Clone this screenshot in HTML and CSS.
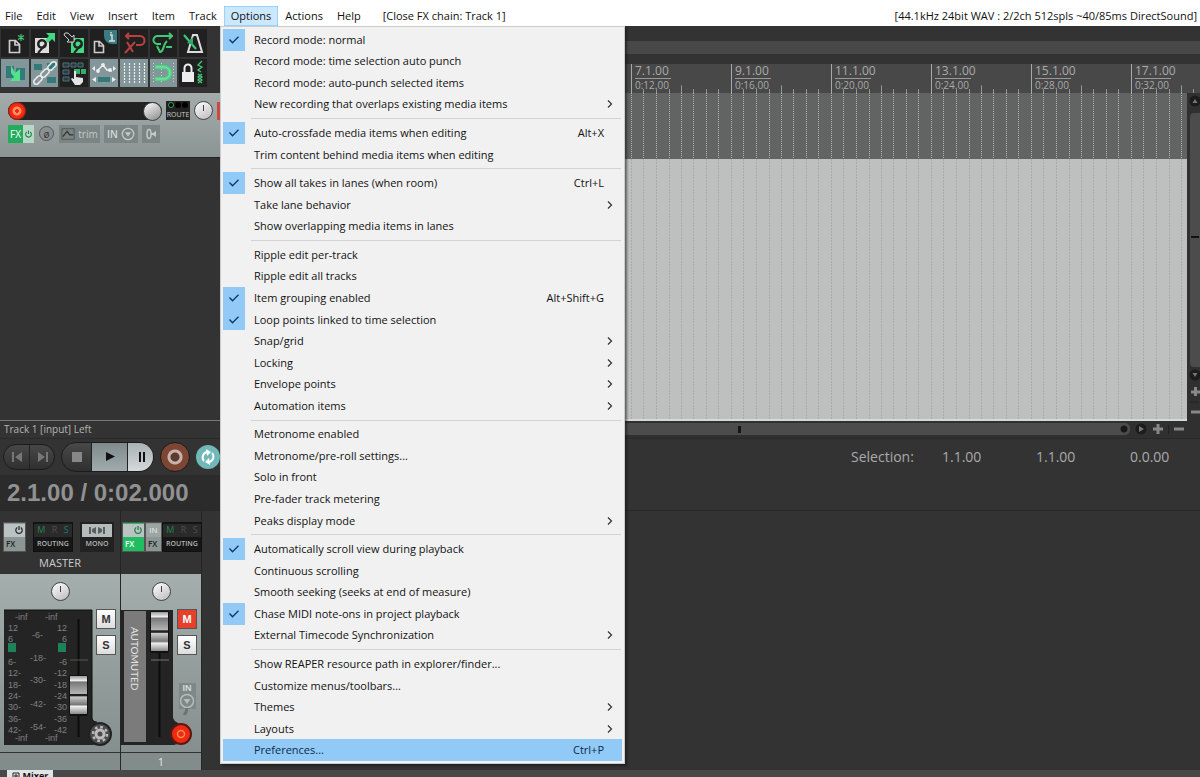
FILE: index.html
```html
<!DOCTYPE html>
<html lang="en">
<head>
<meta charset="utf-8">
<title>REAPER</title>
<link rel="stylesheet" href="styles.css">
</head>
<body>
<svg class="defs" aria-hidden="true">
  <defs>
    <linearGradient id="cap" x1="0" y1="0" x2="0" y2="1"><stop offset="0" stop-color="#999"/><stop offset=".12" stop-color="#eee"/><stop offset=".16" stop-color="#777"/><stop offset=".46" stop-color="#b5b5b5"/><stop offset=".48" stop-color="#222"/><stop offset=".52" stop-color="#222"/><stop offset=".55" stop-color="#ccc"/><stop offset=".75" stop-color="#777"/><stop offset=".8" stop-color="#eee"/><stop offset="1" stop-color="#888"/></linearGradient>
    <symbol id="check" viewBox="0 0 22 21"><path d="M6.500 10.500l3 3.200 6-6" fill="none" stroke="#10375c" stroke-width="1.300"/></symbol>
    <symbol id="chev" viewBox="0 0 8 10"><path d="M2 1.500l3.500 3.500L2 8.500" fill="none" stroke="#333" stroke-width="1.200"/></symbol>
    <symbol id="ticks" viewBox="0 0 100 30" preserveAspectRatio="none"><path d="M.5 0v30" stroke="#aaa"/><path d="M12.500 26v4M25.500 26v4M38.500 26v4M62.500 26v4M75.500 26v4M87.500 26v4M50.500 22v8" stroke="#999"/></symbol>
    <symbol id="power" viewBox="0 0 10 10"><path d="M3.200 2.600a3.200 3.200 0 1 0 3.600 0M5 1v4" fill="none" stroke="currentColor" stroke-width="1.200"/></symbol>
  </defs>
</svg>

<nav class="menubar">
  <button>File</button><button>Edit</button><button>View</button><button>Insert</button><button>Item</button><button>Track</button><button class="open">Options</button><button>Actions</button><button>Help</button>
  <button class="closefx">[Close FX chain: Track 1]</button>
  <span class="audio">[44.1kHz 24bit WAV : 2/2ch 512spls ~40/85ms DirectSound]</span>
</nav>

<main class="workspace">
  <section class="side">
    <div class="toolbar">
      <button aria-label="New project"><svg viewBox="0 0 28 28"><path d="M8.500 11.500h6l4 4v8h-10zM14 12v4h4" fill="none" stroke="#ccc" stroke-width="1.700"/><path d="M20 5v7M17 6.500l6 4M23 6.500l-6 4" stroke="#43c876" stroke-width="1.200"/></svg></button>
      <button aria-label="Open project"><svg viewBox="0 0 28 28"><path d="M4 9h14v15H4z" fill="#ddd"/><circle cx="11" cy="15" r="5" fill="#222"/><circle cx="11" cy="15" r="2.500" fill="#ddd"/><path d="M7 24l7-8" stroke="#222" stroke-width="2"/><path d="M15 4h9v9l-3-3-4 4-3-3 4-4z" fill="#43d982"/></svg></button>
      <button aria-label="Save project"><svg viewBox="0 0 28 28"><path d="M11 9h13v15H11z" fill="#43d982"/><circle cx="18" cy="15" r="5" fill="#222"/><circle cx="18" cy="15" r="2.500" fill="#43d982"/><path d="M14 24l7-8" stroke="#222" stroke-width="2"/><path d="M5 4h3l4 4 2-2v7H7l2-2-5-5z" fill="#222" stroke="#ccc"/></svg></button>
      <button aria-label="Project settings"><svg viewBox="0 0 28 28"><path d="M4.500 12.500h5l4 4v7h-9zM9 13v4h4" fill="none" stroke="#ccc" stroke-width="1.600"/><path d="M14 1h13v14h-5a8 8 0 0 1-8-8z" fill="#397c83"/><path d="M20 6h2v6M19 12h6M21 3v1.500" stroke="#ddd" stroke-width="1.500" fill="none"/></svg></button>
      <button aria-label="Undo"><svg viewBox="0 0 28 28" fill="none" stroke="#b94141" stroke-width="2"><path d="M6 7h14a4 4 0 0 1 0 9h-4M9 4L6 7l3 3M7 13l6 10M15 13L5 24"/></svg></button>
      <button aria-label="Redo"><svg viewBox="0 0 28 28" fill="none" stroke="#43c876" stroke-width="2"><path d="M23 7H9a4 4 0 0 0-1 8h4M20 4l3 3-3 3M18 12c-4 3-3 11-7 11l-3-6M17 18h6"/></svg></button>
      <button aria-label="Metronome"><svg viewBox="0 0 28 28" fill="none"><path d="M14 6h4l5 17H9z" stroke="#ddd" stroke-width="2"/><path d="M5 6l12 14" stroke="#36d279" stroke-width="2"/><path d="M8 14l6-6v8z" fill="#36a565"/></svg></button>
      <button class="on" aria-label="Auto-crossfade"><svg viewBox="0 0 28 28"><path d="M5 7h8v12H5zM15 9h9v12h-9z" fill="#347a7b"/><path d="M10 6l4 8 5-4v12H9l4-4-3-4z" fill="#50e48b"/></svg></button>
      <button class="on" aria-label="Item grouping"><svg viewBox="0 0 28 28"><path d="M3 5h8v6H3zM16 18h9v6h-9zM16 4h8v6h-8z" fill="#347a7b"/><g fill="none" stroke="#e8e8e8" stroke-width="1.700"><rect x="-5" y="-2.500" width="10" height="5" rx="2.500" transform="translate(7 21) rotate(-45)"/><rect x="-5" y="-2.500" width="10" height="5" rx="2.500" transform="translate(14 14) rotate(-45)"/><rect x="-5" y="-2.500" width="10" height="5" rx="2.500" transform="translate(21 7) rotate(-45)"/></g></svg></button>
      <button aria-label="Ripple editing"><svg viewBox="0 0 28 28"><path d="M3 4h6v4H3zM11 4h5v4h-5zM18 4h5v4h-5zM3 11h6v4H3zM3 18h6v4H3z" fill="#273b42" stroke="#527078"/><path d="M14 10h6v5h-6zM21 10h5v5h-5z" fill="#36ae6b"/><path d="M14 12h2v6l7 1v4l-3 3h-5l-4-6 1-1 2 1z" fill="#e4e4e4"/></svg></button>
      <button class="on" aria-label="Envelope move"><svg viewBox="0 0 28 28"><path d="M7 12l6-6 4 5 5 1" fill="none" stroke="#eee" stroke-width="1.500"/><circle cx="8" cy="12" r="1.900" fill="#eee"/><circle cx="13" cy="6" r="1.900" fill="#eee"/><circle cx="20" cy="11" r="1.900" fill="#eee"/><path d="M8 18h12v5H8z" fill="#347a7b"/><path d="M6 18v5l-4-2.500zM22 18v5l4-2.500zM5 7v5L2 9.500zM23 7v5l3-2.500z" fill="#eee"/></svg></button>
      <button class="on" aria-label="Grid"><svg viewBox="0 0 28 28"><path d="M4.500 4v21M9.500 4v21M14.500 4v21M19.500 4v21M24.500 4v21" stroke="#eee" stroke-width="1.200" stroke-dasharray="2 1"/></svg></button>
      <button class="on" aria-label="Snap"><svg viewBox="0 0 28 28"><path d="M4.500 4v21M12.500 4v21M24.500 4v21" stroke="#c8d2d2" stroke-dasharray="1 2"/><path d="M6 8h9a6 6 0 0 1 0 12H6" fill="none" stroke="#3ddd80" stroke-width="4"/><path d="M7 8h8a6 6 0 0 1 0 12H7" fill="none" stroke="#a2d6b8"/></svg></button>
      <button aria-label="Lock"><svg viewBox="0 0 28 28"><path d="M3 13h12v10H3z" fill="#eee"/><path d="M5.500 13V9a3.500 3.500 0 0 1 7 0v4" fill="none" stroke="#eee" stroke-width="2"/><path d="M23 2l-4 4 4 2-4 3 3 2M19 15l4 3-4 3 4 3M23 15l-4 3 4 3-4 3" fill="none" stroke="#43c876" stroke-width="1.300"/></svg></button>
    </div>
    <div class="tcp">
      <div class="tcprow">
        <div class="namebar"><button class="rec" aria-label="Record arm"></button><button class="knob" aria-label="Volume"></button></div>
        <button class="route"><i></i><i></i><i></i><span>ROUTE</span></button>
        <button class="knob up" aria-label="Pan"></button>
        <span class="meterclip"></span>
      </div>
      <div class="tcprow">
        <button class="fx">FX<span><svg><use href="#power"/></svg></span></button>
        <button class="phase" aria-label="Phase">ø</button>
        <button class="chip trim"><svg viewBox="0 0 16 14"><path d="M1 1h14v12H1z" fill="none" stroke="#4b5353"/><path d="M2 10l5-6 3 4h4" fill="none" stroke="#333" stroke-width="1.500"/></svg>trim</button>
        <button class="chip in"><b>IN</b><svg viewBox="0 0 16 16"><circle cx="8" cy="8" r="6.500" fill="none" stroke="#c3c9c9" stroke-width="1.500"/><path d="M4.500 6h7L8 11z" fill="#c3c9c9"/></svg></button>
        <button class="chip" aria-label="Monitor"><svg viewBox="0 0 14 14"><ellipse cx="5" cy="7" rx="2" ry="4.500" fill="none" stroke="#c3c9c9" stroke-width="1.500"/><path d="M7 6h2l3-2v6L9 8H7z" fill="#c3c9c9"/></svg></button>
      </div>
    </div>
  </section>
  <section class="arrange">
    <div class="navbar"></div>
    <div class="ruler" id="ruler"></div>
    <div class="lane" id="lane"></div>
    <div class="empty" id="empty"></div>
  </section>
  <aside class="vscroll"><svg viewBox="0 0 13 328"><rect x="3" y="20" width="14" height="254" rx="4" fill="#4c4c4c"/><circle cx="8" cy="8" r="5.500" fill="#1c1c1c"/><path d="M5.500 10h5L8 6z" fill="#777"/><path d="M4 144h8" stroke="#111" stroke-width="2"/><circle cx="8" cy="282" r="5.500" fill="#1c1c1c"/><path d="M5.500 280h5L8 284z" fill="#777"/><path d="M4 299h9M8.500 294v9M4 319h9" stroke="#888" stroke-width="3"/><path d="M3 309h9" stroke="#222"/></svg></aside>
</main>

<section class="transport">
  <div class="status">Track 1 [input] Left</div>
  <div class="hscroll"><div class="thumb"><i></i></div><svg viewBox="0 0 70 16"><circle cx="11" cy="8" r="5.500" fill="#1c1c1c"/><path d="M9 5v6l5-3z" fill="#777"/><path d="M23 8h10M28 3v10M44 8h10" stroke="#888" stroke-width="3"/><path d="M38.500 4v9" stroke="#222"/></svg></div>
  <div class="buttons">
    <div class="pill nav"><button aria-label="Start"><svg viewBox="0 0 12 10"><path d="M1 0h2v10H1zM11 0v10L4 5z" fill="#777"/></svg></button><button aria-label="End"><svg viewBox="0 0 12 10"><path d="M9 0h2v10H9zM1 0v10l7-5z" fill="#777"/></svg></button></div>
    <div class="pill play"><button aria-label="Stop"><svg viewBox="0 0 12 10"><path d="M1 0h10v10H1z" fill="#888"/></svg></button><button aria-label="Play"><svg viewBox="0 0 12 10"><path d="M2 0v9l9-4.500z" fill="#111"/></svg></button><button aria-label="Pause"><svg viewBox="0 0 12 10"><path d="M3 0h2v10H3zM7 0h2v10H7z" fill="#111"/></svg></button></div>
    <button class="bigrec" aria-label="Record"></button>
    <button class="loop" aria-label="Repeat"><svg viewBox="0 0 16 16"><path d="M4 12a5.500 5.500 0 0 1 3-9M12 4a5.500 5.500 0 0 1-3 9" fill="none" stroke="#fff" stroke-width="2"/><path d="M6 0l5 3-4 4zM10 16l-5-3 4-4z" fill="#fff"/></svg></button>
  </div>
  <div class="selection"><span>Selection:</span><span>1.1.00</span><span>1.1.00</span><span>0.0.00</span></div>
  <div class="time">2.1.00 / 0:02.000</div>
</section>

<section class="mixer">
  <article class="strip master">
    <header>
      <div class="heads">
        <button class="fxbox"><span><svg><use href="#power"/></svg></span><b>FX</b></button>
        <button class="routing"><span><i class="g">M</i><i>R</i><i class="b">S</i></span><b>ROUTING</b></button>
        <button class="mono"><svg viewBox="0 0 30 13"><path d="M0 0h30v13H0z" fill="#b4bdbc"/><path d="M7 3h2v7H7zM10 5l4-2v7l-4-2zM23 3h-2v7h2zM20 5l-4-2v7l4-2z" fill="#596160"/></svg><b>MONO</b></button>
      </div>
      <h2>MASTER</h2>
    </header>
    <div class="body">
      <button class="knob up" aria-label="Pan"></button>
      <div class="panel">
        <svg class="meter" viewBox="0 0 112 138" role="img" aria-label="Master meter">
          <path d="M0 1h88v108a8 8 0 0 0 5 5a12 12 0 0 1-4 22H0z" fill="#242424"/>
          <path d="M0 1h88v108q0 4 5 4" fill="none" stroke="#111"/>
          <g fill="#808080" font-size="9">
            <text x="11" y="11">-inf</text><text x="41" y="11">-inf</text>
            <text x="4" y="22">12</text><text x="4" y="33">6</text><text x="4" y="56">6-</text><text x="4" y="67">12-</text><text x="4" y="79">18-</text><text x="4" y="90">24-</text><text x="4" y="101">30-</text><text x="4" y="113">36-</text><text x="4" y="124">42-</text>
            <text x="28" y="29">-6-</text><text x="26" y="52">-18-</text><text x="26" y="74">-30-</text><text x="26" y="98">-42-</text><text x="26" y="121">-54-</text>
            <g text-anchor="end"><text x="63" y="22">12</text><text x="63" y="33">6</text><text x="63" y="56">-6</text><text x="63" y="67">-12</text><text x="63" y="79">-18</text><text x="63" y="90">-24</text><text x="63" y="101">-30</text><text x="63" y="113">-36</text><text x="63" y="124">-42</text></g>
            <text x="11" y="132">-inf</text><text x="41" y="132">-inf</text>
          </g>
          <path d="M4 34h8v9H4zM54 34h8v9h-8z" fill="#1d8257"/>
          <path d="M74.500 10v118" stroke="#0c0c0c" stroke-width="2"/><path d="M66 51h18" stroke="#555"/>
          <rect x="65" y="66" width="19" height="41" rx="2" fill="#111"/><rect x="66" y="67" width="17" height="38" fill="url(#cap)"/>
          <circle cx="96" cy="125" r="11" fill="#4c4c4c" stroke="#222" stroke-width="2"/><circle cx="96" cy="125" r="4" fill="none" stroke="#bbb" stroke-width="3"/><circle cx="96" cy="125" r="7" fill="none" stroke="#bbb" stroke-width="2.500" stroke-dasharray="2.700 2.800"/>
        </svg>
        <div class="ms"><button>M</button><button>S</button></div>
      </div>
    </div>
    <footer></footer>
  </article>
  <article class="strip track">
    <header>
      <div class="heads">
        <button class="fxbox lit"><span><svg><use href="#power"/></svg></span><b>FX</b></button>
        <button class="fxbox input"><span>IN</span><b>FX</b></button>
        <button class="routing"><span><i class="g">M</i><i>R</i><i>S</i></span><b>ROUTING</b></button>
      </div>
    </header>
    <div class="body">
      <button class="knob up" aria-label="Pan"></button>
      <div class="panel">
        <svg class="meter" viewBox="0 0 76 138" role="img" aria-label="Track fader">
          <path d="M0 1h52v108a8 8 0 0 0 5 5a12 12 0 0 1-4 22H0z" fill="#242424"/>
          <path d="M3 2h22v131H3z" fill="#7b7b7b"/>
          <text class="automuted" transform="translate(10 18) rotate(90)" fill="#e5e5e5" font-size="10">AUTOMUTED</text>
          <path d="M38.500 10v118" stroke="#0c0c0c" stroke-width="2"/><path d="M30 51h18" stroke="#777"/>
          <rect x="29" y="2" width="19" height="42" rx="2" fill="#111"/><rect x="30" y="3" width="17" height="39" fill="url(#cap)"/>
          <circle cx="60" cy="125" r="10" fill="#ed2b14" stroke="#5e1710" stroke-width="2"/><circle cx="60" cy="125" r="3.500" fill="none" stroke="#ff8a4a" stroke-width="1.500"/>
        </svg>
        <div class="ms"><button class="muted">M</button><button>S</button>
          <button class="inbtn">IN<svg viewBox="0 0 16 22"><circle cx="8" cy="8" r="6.500" fill="none" stroke="#b5bcbc" stroke-width="1.500"/><path d="M4.500 6h7L8 11z" fill="#b5bcbc"/><path d="M8 15q0 4-3 7" stroke="#6c7473" stroke-width="3" fill="none"/></svg></button>
        </div>
      </div>
    </div>
    <footer>1</footer>
  </article>
</section>
<footer class="docker"><button><svg viewBox="0 0 8 8"><path d="M1 1h6v6H1zM3 3h2v2H3z" fill="none" stroke="#222"/></svg>Mixer</button></footer>

<div class="menu" id="menu" role="menu"></div>
<script src="app.js"></script>
</body>
</html>
```
FILE: styles.css
```css
* { box-sizing: border-box; }
body { margin: 0; height: 100vh; overflow: hidden; display: flex; flex-direction: column; background: #333; color: #111; font-family: "Open Sans", "Noto Sans", sans-serif; font-size: 11px; line-height: 16px; }
button { margin: 0; padding: 0; border: 0; background: none; color: inherit; font: inherit; display: flex; align-items: center; justify-content: center; flex: none; }
svg { display: block; }
.defs { position: absolute; width: 0; height: 0; }

.menubar { display: flex; align-items: flex-end; height: 26px; background: #fff; padding-right: 3px; flex: none; white-space: nowrap; }
.menubar button { height: 20px; padding: 0 7px; }
.menubar button:first-child { padding-left: 5px; }
.menubar .open { background: #cce8ff; border: 1px solid #99d1ff; padding: 0 6px; }
.menubar .closefx { padding-left: 15px; }
.audio { margin-left: auto; line-height: 20px; }

.workspace { display: flex; flex: none; height: 395px; }
.side { width: 220px; flex: none; background: #333; border-bottom: 1px solid #777; }
.toolbar { display: grid; grid-template-columns: repeat(7, minmax(0, 1fr)); gap: 2px; width: 207px; padding: 3px 0 6px 1px; }
.toolbar button { height: 28px; background: #202020; }
.toolbar button.on { background: #83969a; }
.toolbar svg { width: 28px; height: 28px; flex: none; }
.tcp { background: linear-gradient(#a3acab, #8b9594); height: 65px; padding: 8px 0 0 8px; display: flex; flex-direction: column; gap: 4px; border-bottom: 1px solid #222; }
.tcprow { display: flex; align-items: center; gap: 4px; height: 19px; }
.namebar { width: 155px; height: 18px; border-radius: 9px; background: #222; display: flex; justify-content: space-between; }
.rec { width: 18px; height: 18px; border-radius: 50%; background: radial-gradient(circle, #f22a14 0 2px, #ff9060 2px 4px, #f22a14 5px 7px, #8b1b10 9px); }
.knob { width: 19px; height: 19px; border-radius: 50%; border: 1px solid #444; background: linear-gradient(150deg, #fff, #888); }
.knob.up { background: linear-gradient(#444, #444) 50% 3px / 1px 6px no-repeat, linear-gradient(150deg, #fff, #bbb); }
.route { width: 24px; height: 19px; background: #222; color: #ccc; font-size: 7px; line-height: 8px; flex-wrap: wrap; gap: 1px; }
.route i { width: 6px; height: 6px; border-radius: 50%; background: #000; }
.route i:first-child { border: 1px solid #2ba55c; }
.meterclip { width: 3px; height: 18px; margin-left: auto; background: #cb4a42; }
.fx { width: 26px; height: 18px; background: #23ac5e; color: #fff; font-size: 10px; justify-content: flex-end; gap: 2px; }
.fx span { background: #b8d8c6; color: #1f7f48; padding: 4px 1px; }
.fx svg { width: 9px; height: 10px; }
.phase { width: 15px; height: 15px; border: 1px solid #555; border-radius: 50%; background: #8a9291; color: #333; font-size: 10px; line-height: 10px; margin: 0 1px; }
.chip { height: 18px; padding: 0 2px; gap: 3px; background: #7b8584; color: #c3c9c9; font-size: 10px; }
.chip svg { width: 14px; height: 14px; }
.chip b { color: #d5dada; font-weight: 600; }
.trim { width: 41px; }
.in { width: 34px; }

.arrange { flex: 1; min-width: 0; }
.navbar { height: 38px; background: linear-gradient(#333 15px, #484848 15px 28px, #333 28px); margin-right: -13px; }
.ruler, .lane, .empty { display: flex; padding-left: 411px; }
.lane, .empty { overflow: hidden; }
.ruler { height: 29px; background: #484848; margin-right: -13px; }
.lane { height: 66px; background: #616463; }
.empty { height: 262px; background: #bdc0bf; border-bottom: 2px solid #d5dad9; }
.bar { width: 100px; flex: none; position: relative; }
.ruler .bar { padding-left: 4px; color: #aaa; font-size: 12px; line-height: 14px; }
.ruler .bar small { display: block; width: 36px; border-top: 1px solid #999; font-size: 10px; line-height: 12px; }
.ruler .bar svg { position: absolute; inset: 0; width: 100px; height: 29px; }
.bar > .grid { width: 100px; height: 262px; }
.vscroll { width: 13px; margin-top: 67px; flex: none; background: #303030; }
.vscroll svg { width: 13px; height: 328px; }

.transport { display: grid; grid-template-columns: 220px 1fr; grid-template-rows: 18px 36px 35px; flex: none; border-bottom: 1px solid #292929; }
.status { padding-left: 4px; color: #b5b5b5; font-size: 10px; line-height: 17px; border-bottom: 1px solid #292929; }
.hscroll { display: flex; background: #303030; border-bottom: 1px solid #292929; }
.thumb { flex: 1; height: 12px; margin-top: 2px; border-radius: 0 5px 5px 0; background: radial-gradient(circle at calc(100% - 6px) 50%, #181818 3px, transparent 4px), #4c4c4c; }
.thumb i { display: block; width: 3px; height: 7px; margin: 3px 0 0 518px; background: #151515; }
.hscroll svg { width: 70px; height: 16px; }
.buttons { display: flex; align-items: center; gap: 6px; padding-left: 3px; overflow: hidden; }
.pill { display: flex; border-radius: 15px; overflow: hidden; border: 1px solid #1c1c1c; background: linear-gradient(#484848, #303030); }
.pill button { width: 30px; height: 28px; border-right: 1px solid #222; }
.pill.nav button { width: 26px; height: 24px; }
.pill button:last-child { border-right: 0; }
.pill svg { width: 12px; height: 10px; }
.play button:nth-child(2) { width: 36px; background: linear-gradient(#7f8a8c, #a1abad); }
.play button:nth-child(3) { width: 28px; background: linear-gradient(#a9b1b2, #d5dadb); }
.bigrec { width: 30px; height: 30px; border-radius: 50%; border: 1px solid #1c1c1c; background: radial-gradient(circle, #5b3a30 0 4px, #c9b2aa 5px 7px, #7d4634 8px 14px); }
.loop { width: 24px; height: 24px; border-radius: 50%; background: #71b8b9; }
.loop svg { width: 16px; height: 16px; }
.selection { display: flex; gap: 30px; padding-left: 631px; align-items: center; color: #aaa; font-size: 14px; }
.selection span { flex: none; width: 64px; }
.selection span:first-child { width: 61px; }
.time { grid-column: 1; background: #2b2b2b; color: #919191; font: bold 24px/35px "Liberation Sans", Arial, sans-serif; padding-left: 7px; }

.mixer { display: flex; flex: 1; min-height: 0; }
.strip { display: flex; flex-direction: column; border-right: 1px solid #262626; }
.master { width: 121px; }
.track { width: 81px; }
.strip header { height: 63px; padding-top: 11px; flex: none; }
.heads { display: flex; gap: 7px; padding-left: 3px; }
.track .heads { gap: 0; padding-left: 1px; }
.heads b { font-weight: 600; font-size: 7px; line-height: 14px; }
.heads .fxbox b { font-size: 8px; }
.fxbox { width: 23px; height: 30px; flex-direction: column; background: #8b9695; border: 1px solid #555; align-items: stretch; color: #222; }
.fxbox span { background: #bac3c1; height: 13px; display: flex; justify-content: flex-end; align-items: center; padding-right: 1px; }
.fxbox svg { width: 10px; height: 10px; }
.fxbox b { text-align: left; padding-left: 2px; }
.lit { background: #20bd63; color: #fff; }
.lit svg { color: #1d7e46; }
.input { width: 17px; font-size: 8px; }
.input span { color: #eee; background: #9ba5a4; justify-content: center; padding: 0; }
.routing { width: 40px; height: 30px; flex-direction: column; background: #161616; color: #b5b5b5; border: 1px solid #111; align-items: stretch; }
.routing span { display: flex; justify-content: space-around; background: #2a2a2a; height: 13px; font-size: 9px; line-height: 12px; color: #4d4d4d; }
.routing i { font-style: normal; }
.routing .g { color: #26844c; }
.routing .b { color: #27757c; }
.mono { width: 34px; height: 30px; flex-direction: column; background: #222; color: #b5b5b5; }
.mono svg { width: 30px; height: 13px; }
.strip h2 { margin: 3px 0 0; text-align: center; font-weight: 400; font-size: 11px; line-height: 16px; color: #ccc; }
.body { flex: 1; background: linear-gradient(#a3aead, #848f8e); padding-top: 8px; display: flex; flex-direction: column; align-items: center; }
.panel { display: flex; width: 100%; margin-top: 8px; }
.master .panel { padding-left: 4px; }
.meter { width: 112px; height: 138px; flex: none; font-family: "Liberation Sans", Arial, sans-serif; }
.automuted { font-family: Lato, sans-serif; }
.track .meter { width: 76px; }
.ms { display: flex; flex-direction: column; gap: 6px; margin-left: -20px; }
.ms button { width: 20px; height: 20px; background: linear-gradient(#fff, #ddd); border: 1px solid #555; font: bold 11px/16px "Liberation Sans", Arial, sans-serif; color: #333; }
.ms .muted { background: #e4402c; color: #fff; }
.ms .inbtn { background: #7d8887; border: 0; width: 17px; height: 26px; margin-top: 22px; flex-direction: column; color: #d5dada; font-size: 9px; line-height: 10px; align-self: center; justify-content: flex-start; }
.inbtn svg { width: 16px; height: 22px; flex: none; }
.strip > footer { height: 18px; border-top: 1px solid #333; background: #818c8b; color: #e5e5e5; text-align: center; line-height: 17px; flex: none; }
.docker { height: 7px; background: #484848; flex: none; overflow: hidden; padding-left: 7px; }
.docker button { background: #e0e5e5; width: 46px; height: 12px; gap: 3px; font: bold 9px/12px "Open Sans", sans-serif; }
.docker svg { width: 8px; height: 8px; }

.menu { position: absolute; left: 220px; top: 26px; bottom: 13px; width: 405px; padding: 2px; background: #f1f1f1; border: 1px solid #ccc; box-shadow: 2px 2px 2px #1118; display: flex; flex-direction: column; }
.item { flex: 1 1 0; min-height: 0; padding-right: 8px; text-align: left; }
.item .mark { width: 22px; align-self: stretch; margin-right: 9px; }
.item.checked .mark { background: #91c9f7; }
.item .mark svg { width: 22px; height: 21px; }
.item .label { flex: 1; }
.item .arrow { width: 8px; height: 10px; }
.item .key { margin-right: 10px; }
.item.hot { background: #91c9f7; color: #0b2c4c; }
.menu hr { width: 370px; height: 1px; margin: 3px 1px 3px auto; border: 0; background: #d3d3d3; flex: none; }
```
FILE: app.js
```javascript
const groups = [
  [["Record mode: normal", 1], ["Record mode: time selection auto punch"], ["Record mode: auto-punch selected items"], ["New recording that overlaps existing media items", 0, ">"]],
  [["Auto-crossfade media items when editing", 1, "Alt+X"], ["Trim content behind media items when editing"]],
  [["Show all takes in lanes (when room)", 1, "Ctrl+L"], ["Take lane behavior", 0, ">"], ["Show overlapping media items in lanes"]],
  [["Ripple edit per-track"], ["Ripple edit all tracks"], ["Item grouping enabled", 1, "Alt+Shift+G"], ["Loop points linked to time selection", 1], ["Snap/grid", 0, ">"], ["Locking", 0, ">"], ["Envelope points", 0, ">"], ["Automation items", 0, ">"]],
  [["Metronome enabled"], ["Metronome/pre-roll settings..."], ["Solo in front"], ["Pre-fader track metering"], ["Peaks display mode", 0, ">"]],
  [["Automatically scroll view during playback", 1], ["Continuous scrolling"], ["Smooth seeking (seeks at end of measure)"], ["Chase MIDI note-ons in project playback", 1], ["External Timecode Synchronization", 0, ">"]],
  [["Show REAPER resource path in explorer/finder..."], ["Customize menus/toolbars..."], ["Themes", 0, ">"], ["Layouts", 0, ">"], ["Preferences...", 0, "Ctrl+P"]]
];

document.getElementById("menu").innerHTML = groups.map(rows => rows.map(([label, on, extra]) => {
  const mark = on ? '<svg><use href="#check"/></svg>' : "";
  const end = extra === ">" ? '<svg class="arrow"><use href="#chev"/></svg>' : extra ? `<span class="key">${extra}</span>` : "";
  const cls = "item" + (on ? " checked" : "") + (label === "Preferences..." ? " hot" : "");
  return `<button class="${cls}" role="menuitem"><span class="mark">${mark}</span><span class="label">${label}</span>${end}</button>`;
}).join("")).join("<hr>");

const bars = [["7.1.00", "0:12.00"], ["9.1.00", "0:16.00"], ["11.1.00", "0:20.00"], ["13.1.00", "0:24.00"], ["15.1.00", "0:28.00"], ["17.1.00", "0:32.00"]];
document.getElementById("ruler").innerHTML = bars.map(([bar, time]) =>
  `<div class="bar">${bar}<small>${time}</small><svg><use href="#ticks"/></svg></div>`).join("");

// Eight half-measure divisions per labelled bar.
const offsets = [0, 12, 25, 38, 50, 62, 75, 87];
const grid = (color, dash) => bars.map(() =>
  `<div class="bar"><svg class="grid"><path d="${offsets.map(x => `M${x}.5 0v262`).join("")}" stroke="${color}" stroke-dasharray="${dash}"/></svg></div>`).join("");
document.getElementById("lane").innerHTML = grid("#b0b4b3", "1 1");
document.getElementById("empty").innerHTML = grid("#a9acab", "2 1");
```
